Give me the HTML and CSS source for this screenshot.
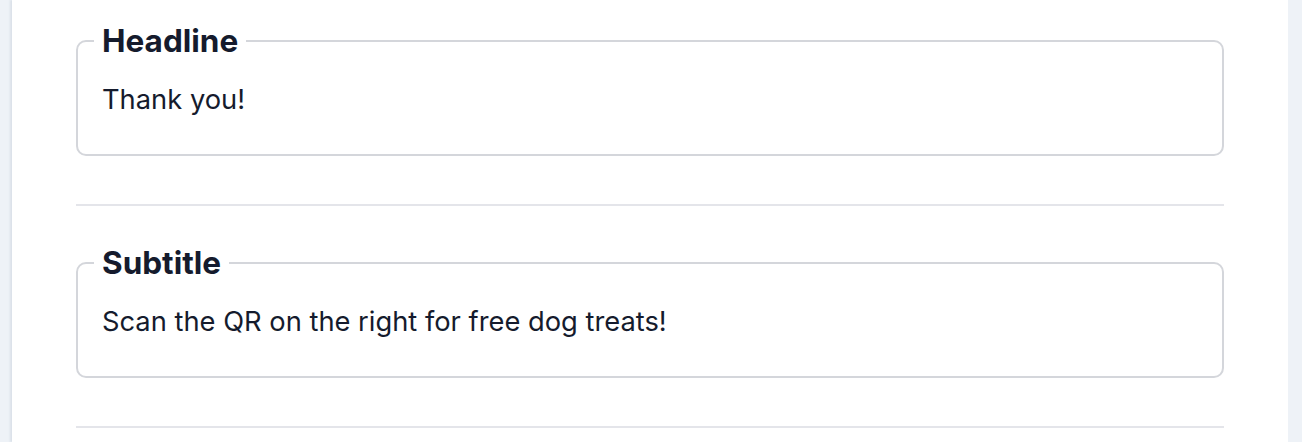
FILE: index.html
```html
<!DOCTYPE html>
<html lang="en">
<head>
  <meta charset="UTF-8">
  <title>Screen text</title>
  <link rel="stylesheet" href="styles.css">
</head>
<body>
  <div class="panel">
    <div class="fields">
      <fieldset class="field">
        <legend>Headline</legend>
        <p class="value">Thank you!</p>
      </fieldset>
      <hr class="divider">
      <fieldset class="field">
        <legend>Subtitle</legend>
        <p class="value">Scan the QR on the right for free dog treats!</p>
      </fieldset>
      <hr class="divider">
    </div>
  </div>
</body>
</html>
```

FILE: styles.css
```css
html, body {
  height: 100%;
}

body {
  margin: 0;
  background: #eef2f7;
  font-family: Inter, "Noto Sans", sans-serif;
  color: #151b2d;
  overflow: hidden;
}

.panel {
  background: white;
  margin: 0 14px 0 12px;
  height: 100%;
  box-shadow: -2px 0 2px rgba(160, 170, 190, 0.25);
}

.fields {
  padding: 21px 64px 0 64px;
}

.field {
  margin: 0;
  border: 2px solid #d4d6db;
  border-radius: 10px;
  padding: 0 24px 34px 24px;
}

.field legend {
  font-size: 31.5px;
  line-height: 40px;
  font-weight: 700;
  padding: 0 8px;
  margin-left: -8px;
}

.value {
  margin: 19px 0 0;
  font-size: 27.3px;
  line-height: 40px;
}

.divider {
  border: none;
  height: 2px;
  background: #e4e5ea;
  margin: 48px 0 37px;
}
```
